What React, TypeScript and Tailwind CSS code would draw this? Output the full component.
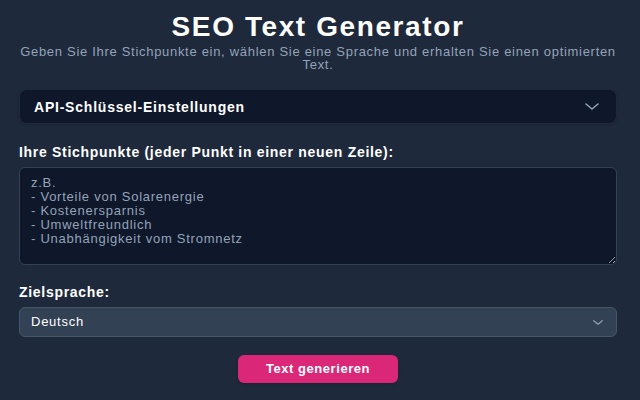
function Chevron({ className }: { className?: string }) {
  return (
    <svg viewBox="0 0 14 7" fill="none" className={className}>
      <polyline
        points="1,1 7,6 13,1"
        stroke="currentColor"
        strokeWidth="1.6"
        strokeLinecap="round"
        strokeLinejoin="round"
      />
    </svg>
  );
}

export default function App() {
  return (
    <div
      className="w-[640px] h-[400px] bg-[#1e293b] overflow-hidden"
      style={{ fontFamily: '"Liberation Sans", Arial, sans-serif' }}
    >
      <div className="pl-[19px] pr-[23px] pt-[13px]">
        <h1 className="text-center text-[28px] leading-[28px] tracking-[1.6px] font-bold text-white">
          SEO Text Generator
        </h1>
        <p className="mt-[4px] text-center text-[13px] leading-[13px] tracking-[0.7px] text-[#94a3b8]">
          Geben Sie Ihre Stichpunkte ein, wählen Sie eine Sprache und erhalten Sie einen optimierten Text.
        </p>

        <div className="mt-[18px] h-[35px] flex items-center justify-between rounded-lg border border-[#1e293b] bg-[#0f172a] pl-[14px] pr-[17px] shadow-sm">
          <span className="text-[14px] leading-[16px] tracking-[0.78px] font-bold text-white">
            API-Schlüssel-Einstellungen
          </span>
          <Chevron className="w-[14px] h-[7px] text-[#94a3b8]" />
        </div>

        <label className="block mt-[20px] text-[14px] leading-[16px] tracking-[0.7px] font-bold text-white">
          Ihre Stichpunkte (jeder Punkt in einer neuen Zeile):
        </label>
        <textarea
          className="mt-[7px] block w-full h-[98px] rounded-md border border-[#334155] bg-[#0f172a] px-[11px] py-[8px] text-[13px] leading-[14px] tracking-[0.75px] text-white placeholder:text-[#94a3b8] outline-none"
          placeholder={'z.B.\n- Vorteile von Solarenergie\n- Kostenersparnis\n- Umweltfreundlich\n- Unabhängigkeit vom Stromnetz'}
        />

        <label className="block mt-[19px] text-[14px] leading-[16px] tracking-[0.7px] font-bold text-white">
          Zielsprache:
        </label>
        <div className="mt-[7px] h-[30px] flex items-center justify-between rounded-md border border-[#475569] bg-[#334155] pl-[11px] pr-[13px]">
          <span className="text-[13px] leading-[16px] tracking-[0.75px] text-white">Deutsch</span>
          <Chevron className="w-[10px] h-[5px] text-[#94a3b8]" />
        </div>

        <div className="mt-[18px] flex justify-center">
          <button className="w-[160px] h-[28px] rounded-md bg-[#db2777] text-[13px] leading-[16px] tracking-[0.55px] font-bold text-white shadow">
            Text generieren
          </button>
        </div>
      </div>
    </div>
  );
}
